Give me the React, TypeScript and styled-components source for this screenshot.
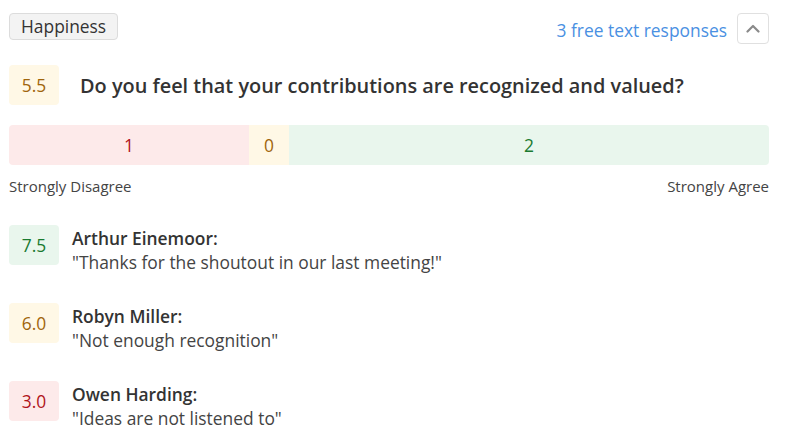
import styled, { createGlobalStyle } from "styled-components";

const GlobalStyle = createGlobalStyle`
  body {
    margin: 0;
    background: #ffffff;
    font-family: "Open Sans", "Liberation Sans", sans-serif;
    color: #333333;
  }
`;

type Tone = "good" | "mid" | "bad";

const tones: Record<Tone, { bg: string; fg: string }> = {
  good: { bg: "#e9f6ed", fg: "#1a7a30" },
  mid: { bg: "#fff8e6", fg: "#a0650c" },
  bad: { bg: "#fdeaea", fg: "#b0141a" },
};

const Page = styled.div`
  width: 760px;
  padding: 13px 0 0 9px;
`;

const Header = styled.div`
  display: flex;
  justify-content: space-between;
  align-items: flex-start;
`;

const Tag = styled.span`
  display: inline-block;
  box-sizing: border-box;
  height: 27px;
  padding: 0 11px;
  line-height: 25px;
  font-size: 17.4px;
  color: #333;
  background: #f3f3f3;
  border: 1px solid #dcdcdc;
  border-radius: 4px;
`;

const HeaderRight = styled.div`
  display: flex;
  align-items: center;
  gap: 10px;
`;

const ResponsesLink = styled.a`
  font-size: 17.4px;
  color: #4a90e2;
  text-decoration: none;
  cursor: pointer;
  padding-top: 2px;
`;

const CollapseButton = styled.button`
  box-sizing: border-box;
  width: 32px;
  height: 31px;
  display: flex;
  align-items: center;
  justify-content: center;
  background: #fff;
  border: 1px solid #e0e0e0;
  border-radius: 4px;
  padding: 0;
  cursor: pointer;
`;

const QuestionRow = styled.div`
  display: flex;
  align-items: center;
  gap: 21px;
  margin-top: 21px;
`;

const Score = styled.div<{ $tone: Tone }>`
  flex: none;
  width: 50px;
  height: 40px;
  display: flex;
  align-items: center;
  justify-content: center;
  border-radius: 4px;
  font-size: 17.4px;
  background: ${(p) => tones[p.$tone].bg};
  color: ${(p) => tones[p.$tone].fg};
`;

const Question = styled.h2`
  margin: 0;
  font-size: 19.9px;
  font-weight: 600;
  color: #333;
`;

const Bar = styled.div`
  display: flex;
  height: 40px;
  margin-top: 20px;
  border-radius: 4px;
  overflow: hidden;
`;

const Segment = styled.div<{ $tone: Tone }>`
  display: flex;
  align-items: center;
  justify-content: center;
  font-size: 17.4px;
  background: ${(p) => tones[p.$tone].bg};
  color: ${(p) => tones[p.$tone].fg};
`;

const Scale = styled.div`
  display: flex;
  justify-content: space-between;
  margin-top: 11px;
  font-size: 15px;
  line-height: 20px;
  color: #444;
`;

const Responses = styled.div`
  display: flex;
  flex-direction: column;
  gap: 29px;
  margin-top: 29px;
`;

const Response = styled.div`
  display: flex;
  align-items: flex-start;
  gap: 13px;
`;

const ResponseText = styled.div`
  font-size: 17.4px;
  line-height: 24px;
  margin-top: 1px;
`;

const Name = styled.div`
  font-weight: 600;
  color: #333;
`;

const Quote = styled.div`
  color: #444;
`;

const segments: { value: number; tone: Tone }[] = [
  { value: 1, tone: "bad" },
  { value: 0, tone: "mid" },
  { value: 2, tone: "good" },
];

const responses: { score: string; tone: Tone; name: string; text: string }[] = [
  {
    score: "7.5",
    tone: "good",
    name: "Arthur Einemoor:",
    text: '"Thanks for the shoutout in our last meeting!"',
  },
  {
    score: "6.0",
    tone: "mid",
    name: "Robyn Miller:",
    text: '"Not enough recognition"',
  },
  {
    score: "3.0",
    tone: "bad",
    name: "Owen Harding:",
    text: '"Ideas are not listened to"',
  },
];

const BAR_WIDTH = 760;
const MIN_SEGMENT = 40;

function App() {
  const total = segments.reduce((s, x) => s + x.value, 0);
  const empties = segments.filter((s) => s.value === 0).length;
  const free = BAR_WIDTH - empties * MIN_SEGMENT;

  return (
    <>
      <GlobalStyle />
      <Page>
        <Header>
          <Tag>Happiness</Tag>
          <HeaderRight>
            <ResponsesLink>3 free text responses</ResponsesLink>
            <CollapseButton aria-label="Collapse">
              <svg width="14" height="9" viewBox="0 0 14 9" fill="none">
                <path
                  d="M1.5 7.5 L7 2 L12.5 7.5"
                  stroke="#8a8a8a"
                  strokeWidth="2.2"
                  strokeLinecap="round"
                  strokeLinejoin="round"
                />
              </svg>
            </CollapseButton>
          </HeaderRight>
        </Header>

        <QuestionRow>
          <Score $tone="mid">5.5</Score>
          <Question>
            Do you feel that your contributions are recognized and valued?
          </Question>
        </QuestionRow>

        <Bar>
          {segments.map((s, i) => (
            <Segment
              key={i}
              $tone={s.tone}
              style={{
                width: s.value === 0 ? MIN_SEGMENT : (free * s.value) / total,
              }}
            >
              {s.value}
            </Segment>
          ))}
        </Bar>
        <Scale>
          <span>Strongly Disagree</span>
          <span>Strongly Agree</span>
        </Scale>

        <Responses>
          {responses.map((r) => (
            <Response key={r.name}>
              <Score $tone={r.tone}>{r.score}</Score>
              <ResponseText>
                <Name>{r.name}</Name>
                <Quote>{r.text}</Quote>
              </ResponseText>
            </Response>
          ))}
        </Responses>
      </Page>
    </>
  );
}

export default App;
